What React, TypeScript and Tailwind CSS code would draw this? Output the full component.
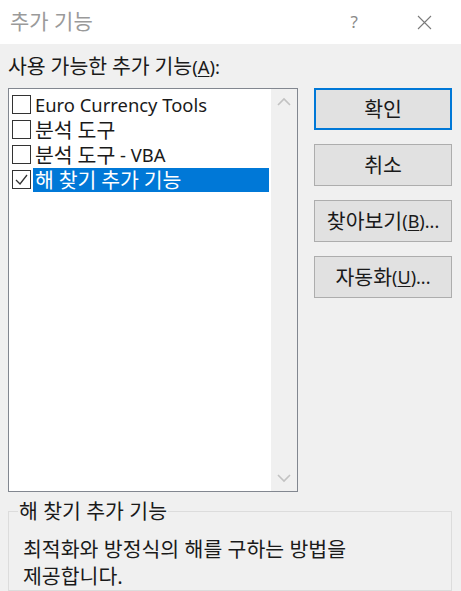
import React from "react";

const font = { fontFamily: '"Noto Sans", "Noto Sans CJK KR", sans-serif' };

// hangul runs get a bigger size so they match the wide Malgun Gothic glyphs
function Ko({ text }: { text: string }) {
  const parts = text.split(/([\uAC00-\uD7A3]+)/);
  return (
    <>
      {parts.map((p, i) =>
        /[\uAC00-\uD7A3]/.test(p) ? (
          <span key={i} className="text-[20.5px]">
            {p}
          </span>
        ) : (
          <span key={i}>{p}</span>
        )
      )}
    </>
  );
}

const items = [
  { label: "Euro Currency Tools", checked: false },
  { label: "분석 도구", checked: false },
  { label: "분석 도구 - VBA", checked: false },
  { label: "해 찾기 추가 기능", checked: true, selected: true },
];

function Check({ checked }: { checked: boolean }) {
  return (
    <div className="w-[19px] h-[19px] border border-[#333333] bg-white flex items-center justify-center shrink-0">
      {checked && (
        <svg width="15" height="15" viewBox="0 0 15 15">
          <path d="M2 8 L6 12 L13 3" fill="none" stroke="#333333" strokeWidth="1.3" />
        </svg>
      )}
    </div>
  );
}

function Btn({ children, primary }: { children: React.ReactNode; primary?: boolean }) {
  return (
    <div
      className={
        "w-[138px] h-[42px] flex items-center justify-center bg-[#e1e1e1] text-[18px] text-[#1a1a1a] " +
        (primary ? "border-2 border-[#0078d7]" : "border border-[#adadad]")
      }
    >
      {children}
    </div>
  );
}

export default function App() {
  return (
    <div className="w-[461px] h-[591px] bg-[#f0f0f0] overflow-hidden flex flex-col" style={font}>
      <div className="h-[44px] bg-white flex items-center shrink-0">
        <span className="ml-[10px] text-[21px] text-[#9a9a9a]">추가 기능</span>
        <span className="ml-auto text-[17px] text-[#8a8a8a] mr-[59px]">?</span>
        <svg width="15" height="15" viewBox="0 0 15 15" className="mr-[29px]">
          <path d="M1 1 L14 14 M14 1 L1 14" stroke="#7a7a7a" strokeWidth="1.1" />
        </svg>
      </div>

      <div className="pl-[8px] pt-[11px] text-[18.4px] leading-[23px] text-[#1a1a1a]">
        <Ko text="사용 가능한 추가 기능(" />
        <span className="underline underline-offset-2">A</span>):
      </div>

      <div className="flex pl-[8px] pt-[10px] gap-[16px]">
        <div className="w-[290px] h-[404px] border border-[#828790] bg-white flex">
          <div className="flex-1 flex flex-col pt-[3px] pl-[3px]">
            {items.map((it) => (
              <div key={it.label} className="h-[25px] flex items-center">
                <Check checked={it.checked} />
                <div
                  className={
                    "ml-[2px] flex-1 h-[24px] flex items-center pl-[2px] text-[18.4px] leading-[22px] whitespace-pre " +
                    (it.selected ? "bg-[#0078d7] text-white" : "text-[#1a1a1a]")
                  }
                >
                  <Ko text={it.label} />
                </div>
              </div>
            ))}
          </div>
          <div className="w-[26px] bg-[#f0f0f0] ml-[2px] flex flex-col items-center justify-between py-[8px]">
            <svg width="14" height="9" viewBox="0 0 14 9">
              <path d="M1 8 L7 2 L13 8" fill="none" stroke="#c2c2c2" strokeWidth="1.6" />
            </svg>
            <svg width="14" height="9" viewBox="0 0 14 9">
              <path d="M1 1 L7 7 L13 1" fill="none" stroke="#c2c2c2" strokeWidth="1.6" />
            </svg>
          </div>
        </div>

        <div className="flex flex-col gap-[14px]">
          <Btn primary>
            <Ko text="확인" />
          </Btn>
          <Btn>
            <Ko text="취소" />
          </Btn>
          <Btn>
            <Ko text="찾아보기(" />
            <span className="underline underline-offset-2">B</span>)...
          </Btn>
          <Btn>
            <Ko text="자동화(" />
            <span className="underline underline-offset-2">U</span>)...
          </Btn>
        </div>
      </div>

      <div className="mx-[8px] mt-[19px] w-[444px] h-[120px] border border-[#dcdcdc] relative">
        <span className="absolute left-[9px] top-[-14px] bg-[#f0f0f0] px-[1px] text-[20.5px] leading-[26px] text-[#1a1a1a]">
          해 찾기 추가 기능
        </span>
        <div className="pl-[14px] pt-[24px] text-[20.5px] leading-[27px] text-[#1a1a1a]">
          최적화와 방정식의 해를 구하는 방법을
          <br />
          제공합니다.
        </div>
      </div>
    </div>
  );
}
